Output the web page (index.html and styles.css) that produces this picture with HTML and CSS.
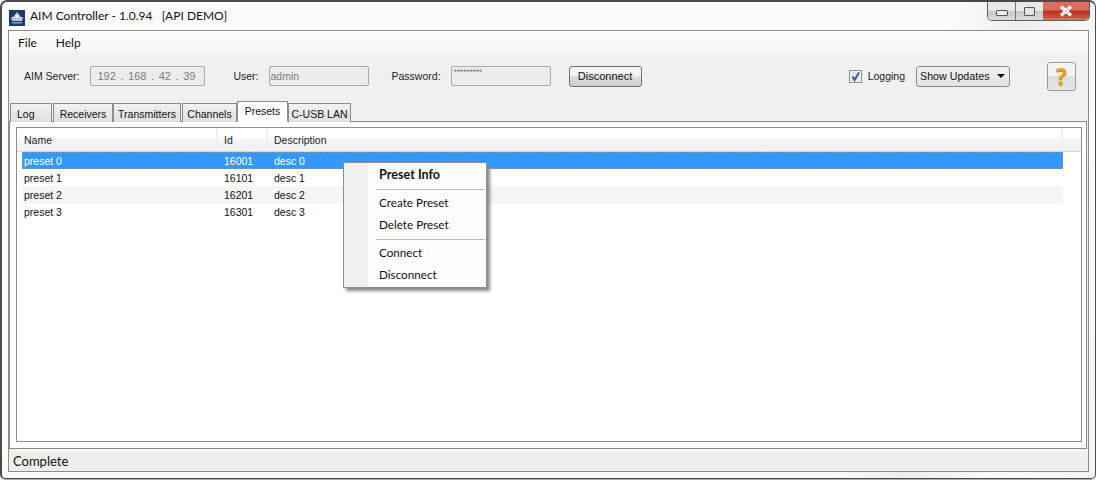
FILE: index.html
```html
<!DOCTYPE html>
<html lang="en">
<head>
<meta charset="utf-8">
<title>AIM Controller</title>
<link rel="stylesheet" href="styles.css">
</head>
<body>
<div class="window">
  <header class="titlebar">
    <svg class="app-icon" width="16" height="16" viewBox="0 0 16 16"><rect width="16" height="16" fill="#1d3a6e"/><path d="M8 2 L12 7 L14 7 L13 11 L3 11 L2 7 L4 7 Z" fill="#b9c6dc"/><path d="M8 4 L10 8 L6 8 Z" fill="#f2f5fa"/><rect x="3" y="12" width="10" height="1.5" fill="#8da0c2"/></svg>
    <span class="title">AIM Controller - 1.0.94   [API DEMO]</span>
    <div class="caption">
      <div class="cap cap-min"><span class="glyph-min"></span></div>
      <div class="cap cap-max"><span class="glyph-max"></span></div>
      <div class="cap cap-close"><svg width="16" height="12" viewBox="0 0 16 12"><path d="M3 1.5 L13 10.5 M13 1.5 L3 10.5" stroke="#fff" stroke-width="3.4" fill="none"/><path d="M3 1.5 L13 10.5 M13 1.5 L3 10.5" stroke="#5a4a48" stroke-width="0.5" fill="none" opacity=".5"/></svg></div>
    </div>
  </header>
  <main class="client">
    <nav class="menubar">
      <span class="menu-item">File</span>
      <span class="menu-item">Help</span>
    </nav>
    <section class="toolbar">
      <label class="lbl lbl-server">AIM Server:</label>
      <div class="field field-ip"><span>192</span><span>.</span><span>168</span><span>.</span><span>42</span><span>.</span><span>39</span></div>
      <label class="lbl lbl-user">User:</label>
      <div class="field field-text">admin</div>
      <label class="lbl lbl-pass">Password:</label>
      <div class="field field-pass">*********</div>
      <button class="btn btn-disconnect">Disconnect</button>
      <div class="check"><svg width="11" height="11" viewBox="0 0 11 11"><path d="M2.5 5.5 L4.6 9 L9 1.5" stroke="#3b5aa8" stroke-width="2" fill="none"/></svg></div>
      <label class="lbl lbl-log">Logging</label>
      <button class="btn btn-updates"><span class="updates-text">Show Updates</span><span class="caret"></span></button>
      <button class="btn btn-help">?</button>
    </section>
    <div class="tabs">
      <div class="tab tab-log">Log</div>
      <div class="tab tab-rec">Receivers</div>
      <div class="tab tab-tra">Transmitters</div>
      <div class="tab tab-cha">Channels</div>
      <div class="tab tab-pre active">Presets</div>
      <div class="tab tab-usb">C-USB LAN</div>
    </div>
    <section class="panel">
      <div class="list">
        <div class="list-head">
          <div class="th">Name</div>
          <div class="th">Id</div>
          <div class="th">Description</div>
          <div class="th"></div>
        </div>
        <div class="row selected"><span>preset 0</span><span>16001</span><span>desc 0</span></div>
        <div class="row"><span>preset 1</span><span>16101</span><span>desc 1</span></div>
        <div class="row alt"><span>preset 2</span><span>16201</span><span>desc 2</span></div>
        <div class="row"><span>preset 3</span><span>16301</span><span>desc 3</span></div>
      </div>
    </section>
    <footer class="status">Complete</footer>
  </main>
  <div class="context">
    <div class="ctx-item ctx-bold">Preset Info</div>
    <div class="ctx-sep"></div>
    <div class="ctx-item">Create Preset</div>
    <div class="ctx-item">Delete Preset</div>
    <div class="ctx-sep ctx-sep-lower"></div>
    <div class="ctx-item">Connect</div>
    <div class="ctx-item">Disconnect</div>
  </div>
</div>
</body>
</html>
```
FILE: styles.css
```css
* { box-sizing: border-box; }
html, body { margin: 0; height: 100%; background: #fff; overflow: hidden; }
body { font: 12px/16px "Lato", "Open Sans", sans-serif; color: #111; }

.window {
  position: relative;
  width: 1096px;
  height: 479px;
  display: flex;
  flex-direction: column;
  border: 1px solid #4a4a4a;
  border-top-width: 2px;
  border-left-width: 2px;
  border-radius: 7px 7px 5px 5px;
  background: linear-gradient(105deg, #fbfbfb 0 78%, #eeeeee 84%, #fafafa 92%, #f4f4f4);
  padding: 0 6px 6px 6px;
  box-shadow: 0 1px 0 #aaa;
}

.titlebar { height: 28px; display: flex; align-items: flex-start; flex: none; }
.app-icon { margin: 8px 5px 0 1px; flex: none; }
.title { white-space: pre; margin-top: 6px; font-size: 12px; color: #111; }
.caption { margin-left: auto; display: flex; height: 19px; border: 1px solid #5e5e5e; border-top: 0; border-radius: 0 0 5px 5px; overflow: hidden; margin-right: -1px; }
.cap { display: flex; align-items: center; justify-content: center; height: 18px; background: linear-gradient(#e9e9e9 0 50%, #c6c8cb 50%, #d9dbdd); }
.cap-min { width: 28px; border-right: 1px solid #777; }
.cap-max { width: 27px; }
.cap-close { width: 46px; background: linear-gradient(#d9705c 0 45%, #b9301c 50%, #c8523c 85%, #d88474); }
.glyph-min { width: 12px; height: 6px; margin-top: 4px; background: #f4f4f4; border: 1px solid #555; border-radius: 1px; }
.glyph-max { width: 11px; height: 9px; background: #e6e6e6; border: 1px solid #555; border-radius: 1px; box-shadow: inset 0 0 0 1px #ddd; }

.client { flex: 1; display: flex; flex-direction: column; border: 1px solid #8c8c8c; background: #f0f0f0; min-height: 0; }

.menubar { height: 24px; display: flex; align-items: center; gap: 19px; padding: 0 0 0 9px; background: linear-gradient(#fdfdfd, #f4f4f4); flex: none; }

.toolbar { height: 46px; display: flex; align-items: center; padding: 0 12px 4px 15px; flex: none; background: #f0f0f0; font-family: "Liberation Sans", Arial, sans-serif; }
.lbl { font-size: 10.5px; color: #222; }
.lbl-user { margin-left: 28px; }
.lbl-pass { margin-left: 23px; }
.lbl-log { margin-left: 6px; }
.field { height: 20px; border: 1px solid #a9a9a9; border-radius: 2px; background: #ececec; color: #7c7c7c; font-size: 10.5px; line-height: 18px; flex: none; }
.field-ip { width: 115px; margin-left: 11px; display: flex; justify-content: space-between; padding: 0 9px 0 6px; font-size: 11px; }
.field-text { width: 100px; margin-left: 10px; padding-left: 1px; }
.field-pass { width: 100px; margin-left: 10px; padding-left: 2px; font-size: 9px; line-height: 11px; letter-spacing: -0.35px; }
.btn { font: inherit; font-size: 11px; color: #111; padding: 0; border: 1px solid #707070; border-radius: 3px; background: linear-gradient(#f4f4f4 0 45%, #dcdcdc 50%, #cfcfcf); flex: none; }
.btn-disconnect { width: 73px; height: 21px; margin-left: 18px; }
.check { width: 13px; height: 13px; margin-left: auto; border: 1px solid #8e8e8e; background: #e6e6e6; display: flex; align-items: center; justify-content: center; box-shadow: inset 0 0 0 1px #f6f6f6; }
.btn-updates { width: 94px; height: 21px; margin-left: 11px; padding-left: 3px; display: flex; align-items: center; border-color: #8a8a8a; background: linear-gradient(#f2f2f2, #e3e3e3); font-size: 10.7px; }
.updates-text { white-space: nowrap; }
.caret { margin-left: auto; margin-right: 4px; border: 4px solid transparent; border-top: 4px solid #111; border-bottom: 0; width: 0; height: 0; }
.btn-help { width: 29px; height: 29px; margin-left: 37px; font: bold 23px/26px "Open Sans", sans-serif; color: #efa51a; text-shadow: 0 1px 0 #c07d0a; border-color: #999; background: linear-gradient(#f4f4f4 0 50%, #dedede 50%, #e6e6e6); }

.tabs { height: 20px; display: flex; align-items: flex-end; padding-left: 1px; flex: none; margin-top: 1px; position: relative; z-index: 1; margin-bottom: -1px; font-family: "Liberation Sans", Arial, sans-serif; }
.tab { height: 19px; border: 1px solid #8c8c8c; border-bottom: 0; background: linear-gradient(#f2f2f2, #dfdfdf); font-size: 10.5px; line-height: 20px; text-align: center; flex: none; }
.tab.active { height: 21px; background: #fff; border-bottom: 1px solid #fff; line-height: 18px; }
.tab-log { width: 42px; text-align: left; padding-left: 6px; }
.tab-rec { width: 60px; margin-left: 1px; }
.tab-tra { width: 68px; }
.tab-cha { width: 55px; margin-left: 1px; }
.tab-pre { width: 51px; }
.tab-usb { width: 63px; }

.panel { flex: 1; min-height: 0; border: 1px solid #8c8c8c; background: #fff; padding: 5px 4px 6px 6px; margin-right: 1px; font-family: "Liberation Sans", Arial, sans-serif; }
.list { height: 100%; border: 1px solid #8c8c8c; background: #fff; }
.list-head { display: grid; grid-template-columns: 201px 50px 795px 1fr; height: 24px; background: linear-gradient(#fff 0 45%, #f4f5f6 50%, #f1f2f4); border-bottom: 1px solid #d8dade; }
.th { padding: 4px 0 0 6px; font-size: 10.5px; border-right: 2px solid #f0f0f2; color: #222; }
.th:first-child { padding-left: 7px; }
.th:last-child { border-right: 0; }
.row { display: grid; grid-template-columns: 200px 50px 1fr; margin-left: 5px; width: 1041px; height: 17px; line-height: 19px; font-size: 10.5px; color: #111; padding-left: 2px; }
.row.selected {
  color: #fff;
  background:
    repeating-linear-gradient(90deg, #c9925c 0 1px, transparent 1px 3px) top / 100% 1px no-repeat,
    repeating-linear-gradient(90deg, #c9925c 0 1px, transparent 1px 3px) bottom / 100% 1px no-repeat,
    repeating-linear-gradient(0deg, #c9925c 0 1px, transparent 1px 3px) left / 1px 100% no-repeat,
    repeating-linear-gradient(0deg, #c9925c 0 1px, transparent 1px 3px) right / 1px 100% no-repeat,
    #3399ff;
}
.row.alt { background: #f5f5f5; }

.status { height: 21px; margin-top: 1px; padding: 2px 0 0 4px; background: #f0eded; border-top: 1px solid #fff; font-size: 13px; flex: none; }

.context { position: absolute; left: 341px; top: 160px; width: 144px; height: 126px; background: linear-gradient(90deg, #f1f1f1 0 24px, #fdfdfd 24px); border: 1px solid #8e8e8e; box-shadow: 3px 3px 3px #8a8a8a; padding-top: 1px; }
.ctx-item { height: 22px; line-height: 20px; padding-left: 35px; font-size: 11.7px; }
.ctx-bold { font-weight: bold; height: 23px; line-height: 22px; font-size: 12.6px; }
.ctx-sep { height: 1px; background: #bdbdbd; margin: 2px 1px 2px 32px; }
.ctx-sep-lower { margin-top: 3px; }
```
